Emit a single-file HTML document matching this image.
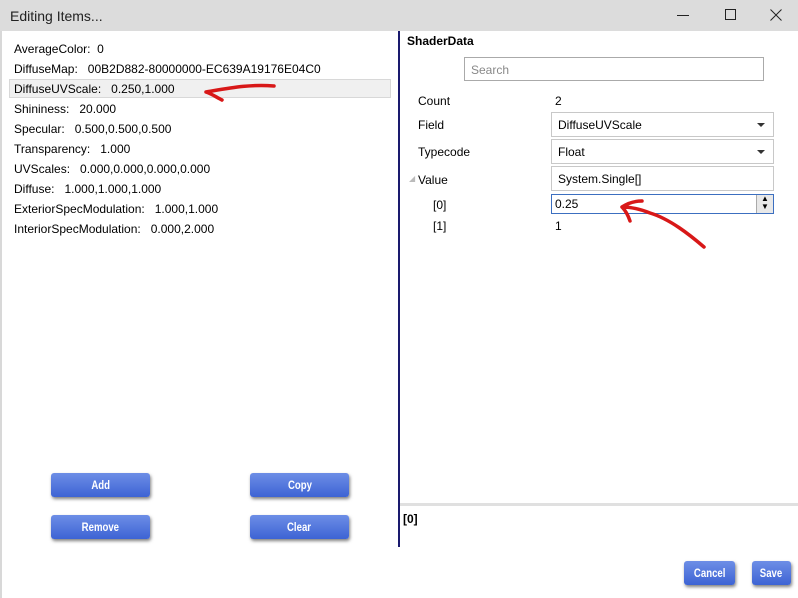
<!DOCTYPE html>
<html><head><style>
*{margin:0;padding:0;box-sizing:border-box}
body{width:798px;height:598px;background:#fff;font-family:"Liberation Sans",sans-serif;font-size:12px;color:#000;position:relative;overflow:hidden}
.a{position:absolute}
.title{left:0;top:0;width:798px;height:31px;background:#dcdcdc}
.row{left:14px;white-space:nowrap}
.btn{position:absolute;background:linear-gradient(#6d8ee6,#3d63d4);border-radius:3px;color:#fff;font-family:"Liberation Sans",sans-serif;font-weight:bold;font-size:12px;text-align:center;line-height:24px;box-shadow:1px 2px 3px rgba(0,0,0,.5)}
.btn span{display:inline-block;transform:scaleX(0.8)}
.box{position:absolute;border:1px solid #c8c8c8;background:#fff;padding-left:6px;line-height:24px}
.dd{position:absolute;right:8px;top:10px;width:0;height:0;border-left:4px solid transparent;border-right:4px solid transparent;border-top:4px solid #333}
</style></head><body>
<div class="a title"></div>
<div class="a" style="left:10px;top:8px;font-size:14px;color:#222">Editing Items...</div>
<div class="a" style="left:677px;top:15px;width:12px;height:1px;background:#222"></div>
<div class="a" style="left:725px;top:9px;width:11px;height:11px;border:1px solid #222"></div>
<svg class="a" style="left:770px;top:9px" width="12" height="12"><path d="M0.5 0.5L11.5 11.5M11.5 0.5L0.5 11.5" stroke="#222" stroke-width="1"/></svg>
<div class="a" style="left:0;top:31px;width:2px;height:567px;background:#d8d8d8"></div>
<div class="a" style="left:398px;top:31px;width:2px;height:516px;background:#1a1a6e"></div>
<div class="a" style="left:400px;top:503px;width:398px;height:3px;background:#e0e0e0"></div>

<div class="a row" style="top:42px">AverageColor:&nbsp;&nbsp;0</div>
<div class="a row" style="top:62px">DiffuseMap:&nbsp;&nbsp;&nbsp;00B2D882-80000000-EC639A19176E04C0</div>
<div class="a" style="left:9px;top:79px;width:382px;height:19px;background:#f0f0f0;border:1px solid #d8d8d8"></div>
<div class="a row" style="top:82px">DiffuseUVScale:&nbsp;&nbsp;&nbsp;0.250,1.000</div>
<div class="a row" style="top:102px">Shininess:&nbsp;&nbsp;&nbsp;20.000</div>
<div class="a row" style="top:122px">Specular:&nbsp;&nbsp;&nbsp;0.500,0.500,0.500</div>
<div class="a row" style="top:142px">Transparency:&nbsp;&nbsp;&nbsp;1.000</div>
<div class="a row" style="top:162px">UVScales:&nbsp;&nbsp;&nbsp;0.000,0.000,0.000,0.000</div>
<div class="a row" style="top:182px">Diffuse:&nbsp;&nbsp;&nbsp;1.000,1.000,1.000</div>
<div class="a row" style="top:202px">ExteriorSpecModulation:&nbsp;&nbsp;&nbsp;1.000,1.000</div>
<div class="a row" style="top:222px">InteriorSpecModulation:&nbsp;&nbsp;&nbsp;0.000,2.000</div>
<svg class="a" style="left:200px;top:80px" width="80" height="22"><path d="M74 6 C50 4 30 8 6 12 M6 12 C12 14 16 17 22 20" stroke="#d81818" stroke-width="3.5" fill="none" stroke-linecap="round"/></svg>

<div class="btn" style="left:51px;top:473px;width:99px"><span>Add</span></div>
<div class="btn" style="left:250px;top:473px;width:99px"><span>Copy</span></div>
<div class="btn" style="left:51px;top:515px;width:99px"><span>Remove</span></div>
<div class="btn" style="left:250px;top:515px;width:99px"><span>Clear</span></div>

<div class="a" style="left:407px;top:34px;font-weight:bold">ShaderData</div>
<div class="box" style="left:464px;top:57px;width:300px;height:24px;color:#888;border-color:#aaa">Search</div>
<div class="a" style="left:418px;top:94px">Count</div>
<div class="a" style="left:555px;top:94px">2</div>
<div class="a" style="left:418px;top:118px">Field</div>
<div class="box" style="left:551px;top:112px;width:223px;height:25px">DiffuseUVScale<div class="dd"></div></div>
<div class="a" style="left:418px;top:145px">Typecode</div>
<div class="box" style="left:551px;top:139px;width:223px;height:25px">Float<div class="dd"></div></div>
<div class="a" style="left:409px;top:174px;color:#bbb;font-size:8px">◢</div>
<div class="a" style="left:418px;top:173px">Value</div>
<div class="box" style="left:551px;top:166px;width:223px;height:25px">System.Single[]</div>
<div class="a" style="left:433px;top:198px">[0]</div>
<div class="box" style="left:551px;top:194px;width:223px;height:20px;line-height:18px;border-color:#3c6fc0;padding-left:3px">0.25
<div class="a" style="right:0;top:0;width:17px;height:18px;border-left:1px solid #aaa;background:#e8e8e8;font-size:8px;line-height:8px;text-align:center">▲<br>▼</div></div>
<div class="a" style="left:433px;top:219px">[1]</div>
<div class="a" style="left:555px;top:219px">1</div>
<svg class="a" style="left:610px;top:195px" width="100" height="60"><path d="M94 52 C80 40 60 24 40 18 C30 14 22 12 12 12 M12 12 C16 16 18 20 20 26 M12 12 C18 8 24 6 32 6" stroke="#d81818" stroke-width="3.5" fill="none" stroke-linecap="round"/></svg>

<div class="a" style="left:403px;top:512px;font-weight:bold">[0]</div>

<div class="btn" style="left:684px;top:561px;width:51px"><span>Cancel</span></div>
<div class="btn" style="left:752px;top:561px;width:39px"><span>Save</span></div>
</body></html>
